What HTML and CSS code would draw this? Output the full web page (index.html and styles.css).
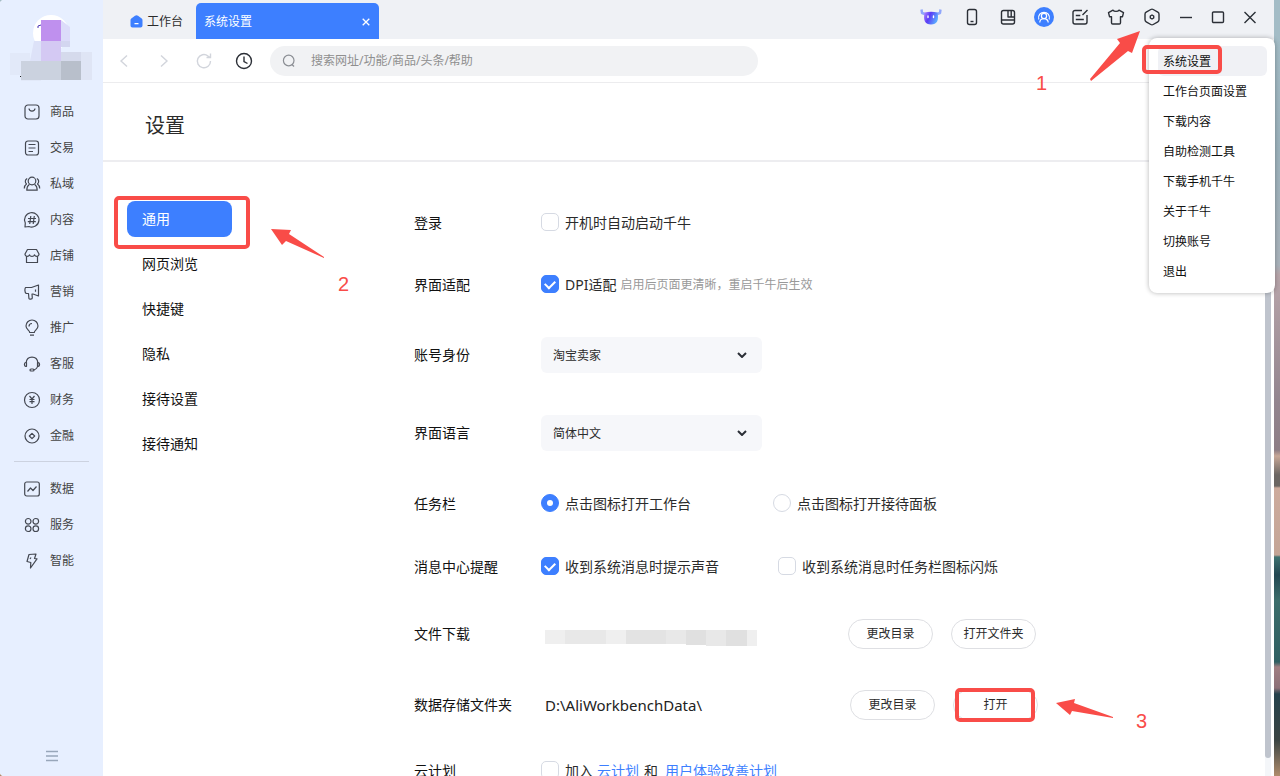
FILE: index.html
```
<!DOCTYPE html>
<html lang="zh-CN">
<head>
<meta charset="utf-8">
<title>系统设置</title>
<link rel="stylesheet" href="styles.css">
</head>
<body>
<div class="window">
  <aside class="sidebar">
    <div class="profile">
      <svg class="profile-mosaic" viewBox="0 0 103 94" aria-hidden="true">
        <circle cx="51" cy="33" r="18" fill="#fff"/>
        <path d="M61 20l9 7v14h-9z" fill="#dcdcfa"/>
        <path d="M34 41h7v20h-11z" fill="#dde2f8"/>
        <path d="M10 53h20v8h11v20H21v-6H10z" fill="#e2e9f9"/>
        <path d="M41 20h20v21H41z" fill="#bf90ee"/>
        <path d="M41 41h20v20H41z" fill="#d4c9f3"/>
        <path d="M61 41h9v6h-9z" fill="#d3d6f0"/>
        <path d="M61 52h20v9H61z" fill="#d5daec"/>
        <path d="M81 52h11v28H81z" fill="#dfe5f5"/>
        <path d="M21 61h40v19H21z" fill="#cbd2df"/>
        <path d="M61 61h20v19H61z" fill="#b8bfcb"/>
        <path d="M38 28v-2l3-1" fill="none" stroke="#4b35b5" stroke-width="1"/>
        <path d="M20 76h1v1h-1z" fill="#222"/>
      </svg>
    </div>
    <nav class="side-nav">
      <a href="#"><svg viewBox="0 0 16 16"><rect x="1" y="1" width="14" height="14" rx="3"/><path d="M5 4.500c.4 3.500 5.600 3.500 6 0"/></svg>商品</a>
      <a href="#"><svg viewBox="0 0 16 16"><rect x="1.500" y="1" width="13" height="14" rx="2.500"/><path d="M4.500 4.500h7M4.500 8h7M4.500 11.500h4.500"/></svg>交易</a>
      <a href="#"><svg viewBox="0 0 16 16"><circle cx="8" cy="5" r="3.800"/><path d="M5.500 8.200C3.500 9.500 2.800 11.500 2.800 14.200h10.400c0-2.700-.7-4.700-2.700-6M3.200 2.500C.8 3.800.8 6.500 2.500 8 1 9 .4 10.500.3 12.500M12.800 2.500c2.400 1.300 2.400 4 .7 5.500 1.500 1 2.100 2.500 2.200 4.500"/></svg>私域</a>
      <a href="#"><svg viewBox="0 0 16 16"><path d="M1 15l.3-4A7.200 7.200 0 1 1 5 14.500zM6.800 4l-1.100 8M10.300 4l-1.100 8M4 6.500h8M3.800 9.700h8"/></svg>内容</a>
      <a href="#"><svg viewBox="0 0 16 16"><path d="M3.500 1.500h9L15 6c0 3-3.500 3.200-4.600.8C9.800 9 6.200 9 5.600 6.800 4.500 9.200 1 9 1 6zM2.500 8.500v6h11v-6"/></svg>店铺</a>
      <a href="#"><svg viewBox="0 0 16 16"><path d="M1.500 3.500h6L14.500 1v11L9 10H8l.3 4c0 1.200-3.100 1.500-3.400.3L4.500 9.500H2.200C.6 8.500.6 4.800 1.500 3.500zM11.500 5.500v2.300"/></svg>营销</a>
      <a href="#"><svg viewBox="0 0 16 16"><path d="M5.700 12.500c0-2-3.700-3-3.700-6.500a6 6 0 0 1 12 0c0 3.500-3.700 4.500-3.700 6.500zM6 15.200h4M5 6.500A3 3 0 0 1 8 3.500"/></svg>推广</a>
      <a href="#"><svg viewBox="0 0 16 16"><path d="M2.200 6.500C2.800-.8 13.200-.8 13.800 6.500v3c-.5 2.800-2 4-4.300 4.500M2.500 6.500h-.8C0 6.800 0 10 1.700 10.300h.8zM13.500 6.500h.8c1.700.3 1.700 3.500 0 3.800h-.8z"/><rect x="6" y="13" width="4" height="2" rx="1"/></svg>客服</a>
      <a href="#"><svg viewBox="0 0 16 16"><circle cx="8" cy="8" r="7.500"/><path d="M5.500 4L8 7l2.500-3M8 7v5M5.500 7.500h5M5.500 9.700h5"/></svg>财务</a>
      <a href="#"><svg viewBox="0 0 16 16"><circle cx="8" cy="8" r="7"/><path d="M8 5.300L10.700 8 8 10.700 5.300 8z"/></svg>金融</a>
      <hr>
      <a href="#"><svg viewBox="0 0 16 16"><rect x=".7" y="1" width="14.600" height="14" rx="2"/><path d="M3.500 10.500l3-3.500 2.500 2.500 3.500-4"/></svg>数据</a>
      <a href="#"><svg viewBox="0 0 16 16"><circle cx="4.200" cy="4.300" r="2.800"/><circle cx="11.800" cy="4.300" r="2.800"/><circle cx="4.200" cy="11.700" r="2.800"/><circle cx="11.800" cy="11.700" r="2.800"/></svg>服务</a>
      <a href="#"><svg viewBox="0 0 16 16"><path d="M5 1.500L12 1l-1.500 4.500 2.500.3L6.500 15l.3-5.500L3 8.500zM7 4.500L6 6"/></svg>智能</a>
    </nav>
    <button class="collapse" aria-label="展开菜单"><svg viewBox="0 0 12 12"><path d="M0 1.500h12M0 6h12M0 10.500h12"/></svg></button>
  </aside>

  <main class="main">
    <header class="titlebar">
      <a class="tab" href="#"><svg viewBox="0 0 13 13"><path d="M5 .8c1-.8 2-.8 3 0l3.700 2.700c.6.500.8 1 .8 1.700v5.300c0 1.200-.8 2-2 2h-8c-1.200 0-2-.8-2-2V5.200c0-.7.2-1.200.8-1.700z" fill="#3d7fff"/><path d="M4.500 8.700h4" stroke="#fff" stroke-width="1.200"/></svg>工作台</a>
      <div class="tab tab-active"><span>系统设置</span><button class="tab-close" aria-label="关闭标签"><svg viewBox="0 0 8 8"><path d="M.7.7l6.600 6.600M7.300.7L.7 7.300"/></svg></button></div>
      <div class="tools">
        <button class="tool-mascot" aria-label="千牛助手"><svg viewBox="0 0 22 18">
          <defs><linearGradient id="bull" x1="0" x2="1" y1="0" y2=".4"><stop offset="0" stop-color="#b58cff"/><stop offset=".45" stop-color="#5a3cf5"/><stop offset="1" stop-color="#5ba8ff"/></linearGradient></defs>
          <path d="M1.500 1.500l.5 3.500 3 1M20.500 1.500l-.5 3.500-3 1" fill="none" stroke="#8fa6fb" stroke-width="2.400"/>
          <path d="M4.500 4.500c4-1 9-1 13 0 1.500 8-.5 12-6.500 12S3 12.500 4.500 4.500z" fill="url(#bull)"/>
          <path d="M8 8v1.500M13.500 8v1.500" stroke="#fff" stroke-width="1.400" stroke-linecap="round"/></svg></button>
        <button aria-label="手机"><svg viewBox="0 0 18 18"><rect x="4.500" y="1.500" width="9" height="15" rx="2"/><path d="M7.500 13.500h3"/></svg></button>
        <button aria-label="书签"><svg viewBox="0 0 18 18"><rect x="2.500" y="2.500" width="13" height="13.500" rx="2"/><path d="M2.500 12h13M9 2.500v6.500h6.500M12.200 2.500v6.500"/></svg></button>
        <button class="tool-avatar" aria-label="客服"><svg viewBox="0 0 20 20"><circle cx="10" cy="10" r="10" fill="#3d7fff"/><g fill="none" stroke="#fff" stroke-width="1.200"><circle cx="10" cy="9" r="2.600"/><path d="M5.800 15.500c0-5 8.400-5 8.400 0M4.800 12.500C2.500 3 17.500 3 15.200 12.500"/></g></svg></button>
        <button aria-label="待办"><svg viewBox="0 0 18 18"><path d="M11 2.500H4a2 2 0 0 0-2 2v9.500a2 2 0 0 0 2 2h10a2 2 0 0 0 2-2V7M4.800 7.500h4.500M4.800 11.500h8M11.500 7L16.500 2"/></svg></button>
        <button aria-label="皮肤"><svg viewBox="0 0 18 18"><path d="M6 2.200c1 1.600 5 1.600 6 0l4.500 2.500-1 4-2 .1v6c0 .7-.5 1.200-1.200 1.200H5.700c-.7 0-1.200-.5-1.200-1.200v-6l-2-.1-1-4z"/></svg></button>
        <button aria-label="设置"><svg viewBox="0 0 18 18"><path d="M7.800 1.500q1.200-.7 2.400 0l4.600 2.700q1.200.7 1.200 2v5.600q0 1.300-1.200 2l-4.600 2.700q-1.200.7-2.400 0l-4.600-2.700Q2 13.100 2 11.800V6.200q0-1.300 1.200-2z"/><path d="M9 7l1.700 1v2L9 11l-1.700-1V8z"/></svg></button>
        <button class="tool-window" aria-label="最小化"><svg viewBox="0 0 18 18"><path d="M3 9.500h12"/></svg></button>
        <button class="tool-window" aria-label="最大化"><svg viewBox="0 0 18 18"><rect x="3.500" y="4" width="11" height="10.500" rx="1"/></svg></button>
        <button class="tool-window" aria-label="关闭"><svg viewBox="0 0 18 18"><path d="M3.500 4l11 11M14.500 4l-11 11"/></svg></button>
      </div>
    </header>

    <div class="toolbar">
      <button class="faded" aria-label="后退"><svg viewBox="0 0 18 18"><path d="M12 3.500L6 9l6 5.500"/></svg></button>
      <button class="faded" aria-label="前进"><svg viewBox="0 0 18 18"><path d="M6 3.500L12 9l-6 5.500"/></svg></button>
      <button class="faded" aria-label="刷新"><svg viewBox="0 0 18 18"><path d="M15.500 9A6.600 6.600 0 1 1 13 4l2 1.500M15.500 1.500v4h-4"/></svg></button>
      <button aria-label="历史"><svg viewBox="0 0 18 18"><circle cx="9" cy="9" r="7.500"/><path d="M9 4.500V9.500l3.500 2"/></svg></button>
      <label class="search">
        <svg viewBox="0 0 14 14"><circle cx="6.700" cy="6.500" r="5.300"/><path d="M10 10.500l2 2"/></svg>
        <input type="search" aria-label="搜索" placeholder="搜索网址/功能/商品/头条/帮助">
      </label>
    </div>

    <h1 class="page-title">设置</h1>

    <div class="content">
      <nav class="section-nav">
        <a class="current" href="#">通用</a>
        <a href="#">网页浏览</a>
        <a href="#">快捷键</a>
        <a href="#">隐私</a>
        <a href="#">接待设置</a>
        <a href="#">接待通知</a>
      </nav>
      <form class="settings">
        <div class="row">
          <span class="name">登录</span>
          <label class="option"><input type="checkbox">开机时自动启动千牛</label>
        </div>
        <div class="row">
          <span class="name">界面适配</span>
          <label class="option"><input type="checkbox" checked>DPI适配</label>
          <span class="hint">启用后页面更清晰，重启千牛后生效</span>
        </div>
        <div class="row row-select">
          <label class="name" for="identity">账号身份</label>
          <span class="select"><select id="identity"><option>淘宝卖家</option></select><svg viewBox="0 0 10 6"><path d="M1 1l4 4 4-4"/></svg></span>
        </div>
        <div class="row row-select">
          <label class="name" for="language">界面语言</label>
          <span class="select"><select id="language"><option>简体中文</option></select><svg viewBox="0 0 10 6"><path d="M1 1l4 4 4-4"/></svg></span>
        </div>
        <div class="row row-radio">
          <span class="name">任务栏</span>
          <label class="option"><input type="radio" name="taskbar" checked>点击图标打开工作台</label>
          <label class="option"><input type="radio" name="taskbar">点击图标打开接待面板</label>
        </div>
        <div class="row row-pair">
          <span class="name">消息中心提醒</span>
          <label class="option"><input type="checkbox" checked>收到系统消息时提示声音</label>
          <label class="option"><input type="checkbox">收到系统消息时任务栏图标闪烁</label>
        </div>
        <div class="row row-buttons">
          <span class="name">文件下载</span>
          <span class="path path-hidden"><svg viewBox="0 0 212 17" aria-hidden="true"><path d="M0 0h212v14H0z" fill="#efefef"/><path d="M20 0h41v14H20z" fill="#e8e8e8"/><path d="M61 0h20v14H61z" fill="#efefef"/><path d="M81 0h40v14H81z" fill="#e3e3e3"/><path d="M121 0h20v14h-20z" fill="#e8e8e8"/><path d="M141 0h20v15h-20z" fill="#e0e0e0"/><path d="M161 0h20v16h-20z" fill="#e8e8e8"/><path d="M181 0h21v16h-21z" fill="#e0e0e0"/><path d="M202 0h10v16h-10z" fill="#efefef"/></svg></span>
          <button type="button" class="pill">更改目录</button>
          <button type="button" class="pill">打开文件夹</button>
        </div>
        <div class="row row-buttons">
          <span class="name">数据存储文件夹</span>
          <span class="path path-text">D:\AliWorkbenchData\</span>
          <button type="button" class="pill">更改目录</button>
          <button type="button" class="pill marked">打开</button>
        </div>
        <div class="row">
          <span class="name">云计划</span>
          <label class="option"><input type="checkbox">加入</label>
          <span class="links"><a href="#">云计划</a><span>和</span><a href="#">用户体验改善计划</a></span>
        </div>
      </form>
      <div class="scrollbar"><div class="thumb"></div></div>
    </div>
  </main>
</div>

<div class="menu">
  <button class="chosen">系统设置</button>
  <button>工作台页面设置</button>
  <button>下载内容</button>
  <button>自助检测工具</button>
  <button>下载手机千牛</button>
  <button>关于千牛</button>
  <button>切换账号</button>
  <button>退出</button>
</div>

<svg class="arrow arrow-one" viewBox="0 0 50 50" aria-hidden="true"><path d="M50 0L27 8l3 4L0 48l1 2L38 20l4 2z"/></svg>
<span class="digit digit-one">1</span>
<svg class="arrow arrow-two" viewBox="0 0 54 30" aria-hidden="true"><path d="M0 0l20 1-2 4 35 23v1L15 12l-4 4z"/></svg>
<span class="digit digit-two">2</span>
<svg class="arrow arrow-three" viewBox="0 0 58 20" aria-hidden="true"><path d="M0 4l19-4-1 4 39 14v1L16 12l-2 4z"/></svg>
<span class="digit digit-three">3</span>
</body>
</html>
```

FILE: styles.css
```
* { box-sizing: border-box; }

body {
  position: relative;
  margin: 0;
  height: 100vh;
  overflow: hidden;
  padding-right: 6px;
  font: 14px/20px "Noto Sans", "Noto Sans CJK SC", sans-serif;
  color: #2b2b2b;
  background: linear-gradient(#a3bcc6 0, #a3bcc6 38px, #9cb2bc 150px, #a9b3bb 265px,
    #b8a5aa 275px, #93858f 400px, #8d7d85 450px, #c7a797 456px, #6b6663 475px, #6b6663 486px,
    #cdab9d 488px, #c4a596 555px, #3f7271 557px, #234752 575px, #3c6d6b 600px, #2f5f62 662px,
    #a07e82 667px, #8c7078 688px, #24414c 694px, #3a4443 740px, #b08c6c 776px);
}

button, input, select { font: inherit; color: inherit; }
button { padding: 0; border: 0; background: none; display: grid; place-items: center; }
a { color: inherit; text-decoration: none; }

.window {
  display: flex;
  height: 100%;
  background: #fff;
  border-radius: 4px 0 0 4px;
  overflow: hidden;
}

/* Left sidebar */
.sidebar {
  display: flex;
  flex-direction: column;
  flex: none;
  width: 103px;
  background: #e7efff;
}
.profile { height: 94px; }
.profile-mosaic { display: block; width: 103px; height: 94px; }
.side-nav a {
  display: flex;
  align-items: center;
  gap: 10px;
  height: 36px;
  padding-left: 24px;
  font-size: 12px;
  color: #444;
}
.side-nav svg {
  width: 16px;
  height: 16px;
  fill: none;
  stroke: #444852;
  stroke-width: 1.2;
  stroke-linejoin: round;
  overflow: visible;
}
.side-nav hr { margin: 7px 14px 9px; border: 0; border-top: 1px solid #ccd2e0; }
.collapse { width: 100%; height: 20px; margin: auto 0 10px; }
.collapse svg { width: 12px; height: 12px; stroke: #98a6ba; stroke-width: 1.5; }

/* Title bar */
.main { display: flex; flex-direction: column; flex: 1; min-width: 0; }
.titlebar { display: flex; flex: none; height: 39px; background: #eff1f5; padding-right: 8px; }
.tab {
  display: flex;
  align-items: center;
  gap: 4px;
  margin-top: 3px;
  padding: 1px 13px 0 27px;
  font-size: 12px;
}
.tab svg { width: 13px; height: 13px; }
.tab-active {
  width: 183px;
  justify-content: space-between;
  padding: 1px 9px 0 8px;
  color: #fff;
  background: #3d7fff;
  border-radius: 5px 5px 0 0;
}
.tab-close svg { width: 8px; height: 8px; stroke: #fff; stroke-width: 1.3; }
.tools { display: flex; height: 34px; margin-left: auto; }
.tools button { width: 36px; }
.tools svg {
  width: 18px;
  height: 18px;
  fill: none;
  stroke: #2b2f36;
  stroke-width: 1.4;
  stroke-linejoin: round;
}
.tools .tool-mascot { width: 46px; }
.tools .tool-window { width: 32px; }
.tools .tool-mascot svg { width: 22px; stroke: none; }
.tools .tool-avatar svg { width: 20px; height: 20px; stroke: none; }

/* Address row */
.toolbar {
  display: flex;
  align-items: center;
  flex: none;
  gap: 22px;
  height: 44px;
  padding-left: 12px;
  border-bottom: 1px solid #ececee;
}
.toolbar button { width: 18px; height: 18px; }
.toolbar button svg { width: 18px; height: 18px; fill: none; stroke: #2b2f36; stroke-width: 1.4; }
.toolbar .faded svg { stroke: #d2d5dc; }
.search {
  display: flex;
  align-items: center;
  gap: 15px;
  flex: 0 1 488px;
  margin-left: -5px;
  height: 30px;
  padding: 0 12px;
  border-radius: 15px;
  background: #f1f2f4;
}
.search svg { width: 14px; height: 14px; fill: none; stroke: #8b8e94; stroke-width: 1.2; }
.search input { flex: 1; min-width: 0; padding: 0; border: 0; outline: 0; background: none; font-size: 12px; }
.search input::placeholder { color: #8f8f8f; }

.page-title {
  flex: none;
  margin: 0;
  padding: 29px 42px 20px;
  font-size: 20px;
  line-height: 28px;
  font-weight: 400;
  border-bottom: 2px solid #ededf0;
}

/* Settings */
.content { display: flex; flex: 1; min-height: 0; }
.section-nav {
  display: flex;
  flex-direction: column;
  gap: 9px;
  flex: none;
  width: 105px;
  margin: 39px 182px 0 24px;
}
.section-nav a { padding: 8px 15px; border-radius: 8px; color: #111; }
.section-nav .current { position: relative; color: #fff; background: #3d7fff; }
.section-nav .current::after {
  content: "";
  position: absolute;
  inset: -5px -18px -12px -13px;
  border: 4px solid #f94c48;
  border-radius: 5px;
}

.settings {
  display: flex;
  flex-direction: column;
  gap: 40px;
  flex: 1;
  min-width: 0;
  padding-top: 50px;
  overflow: hidden;
}
.row { display: flex; align-items: center; flex: none; height: 22px; white-space: nowrap; }
.row-select { height: 38px; }
.row-radio { height: 24px; }
.row-buttons { height: 31px; }
.name { flex: none; width: 127px; color: #111; }
.option { display: flex; align-items: center; gap: 6px; }
.row-radio .option + .option { margin-left: 82px; }
.row-pair .option + .option { margin-left: 59px; }
.option input {
  appearance: none;
  display: grid;
  place-items: center;
  width: 18px;
  height: 18px;
  margin: 0 0 2px;
  border: 1px solid #d6dae3;
  border-radius: 5px;
  background: #fff;
}
.option input[type="radio"] { border-radius: 50%; }
.option input:checked { border-color: #3d7fff; background: #3d7fff; }
.option input[type="checkbox"]:checked::after {
  content: "";
  width: 8px;
  height: 5px;
  margin-bottom: 2px;
  border: solid #fff;
  border-width: 0 0 2px 2px;
  transform: rotate(-45deg);
}
.option input[type="radio"]:checked::after {
  content: "";
  width: 6px;
  height: 6px;
  border-radius: 50%;
  background: #fff;
}
.hint { margin-left: 4px; font-size: 12px; color: #999; }

.select { display: grid; align-items: center; width: 221px; }
.select select, .select svg { grid-area: 1 / 1; }
.select select {
  appearance: none;
  height: 36px;
  padding: 1px 12px 0;
  border: 0;
  border-radius: 6px;
  background: #f6f7fa;
  font-size: 12px;
}
.select svg {
  justify-self: end;
  width: 10px;
  height: 6px;
  margin-right: 15px;
  fill: none;
  stroke: #2b2f36;
  stroke-width: 2;
  pointer-events: none;
}

.path { width: 307px; padding-left: 4px; color: #222; }
.path-text { width: 309px; font-size: 15px; }
.path-hidden svg { display: block; width: 212px; height: 17px; margin-top: 10px; }
.pill {
  width: 85px;
  height: 30px;
  border: 1px solid #dedfe3;
  border-radius: 15px;
  font-size: 12px;
}
.pill + .pill { margin-left: 18px; }
.marked { position: relative; }
.marked::after {
  content: "";
  position: absolute;
  inset: -3px 2px -3px 1px;
  border: 4px solid #f94c48;
  border-radius: 5px;
}
.links { display: flex; gap: 5px; margin-left: 4px; }
.links a { color: #3d7fff; }
.links a + span { margin-right: 2px; }

.scrollbar { flex: none; width: 6px; margin-right: 3px; padding-bottom: 18px; background: #f4f6f9; }
.thumb { height: 100%; border-radius: 3px; background: #bfc4cd; }

/* Dropdown over the page */
.menu {
  position: absolute;
  top: 38px;
  right: 5px;
  width: 126px;
  padding: 8px 8px 7px 9px;
  border-radius: 8px;
  background: #fff;
  box-shadow: 0 0 5px rgba(0, 0, 0, .3);
}
.menu button {
  display: block;
  width: 100%;
  height: 30px;
  padding: 2px 0 0 5px;
  border-radius: 6px;
  font-size: 12px;
  text-align: left;
  color: #111;
}
.menu .chosen { position: relative; background: #f0f1f5; }
.menu .chosen::after {
  content: "";
  position: absolute;
  inset: -1px 45px 2px -16px;
  border: 4px solid #f94c48;
  border-radius: 5px;
}

/* Step markers */
.arrow { position: absolute; fill: #f94c48; }
.arrow-one { top: 31px; right: 140px; width: 50px; height: 50px; }
.arrow-two { top: 229px; left: 271px; width: 54px; height: 30px; }
.arrow-three { top: 699px; left: 1056px; width: 58px; height: 20px; }
.digit { position: absolute; font: 20px/20px "Liberation Sans", sans-serif; color: #f94c48; }
.digit-one { top: 73px; right: 233px; }
.digit-two { top: 274px; left: 338px; }
.digit-three { top: 711px; left: 1136px; }
```
